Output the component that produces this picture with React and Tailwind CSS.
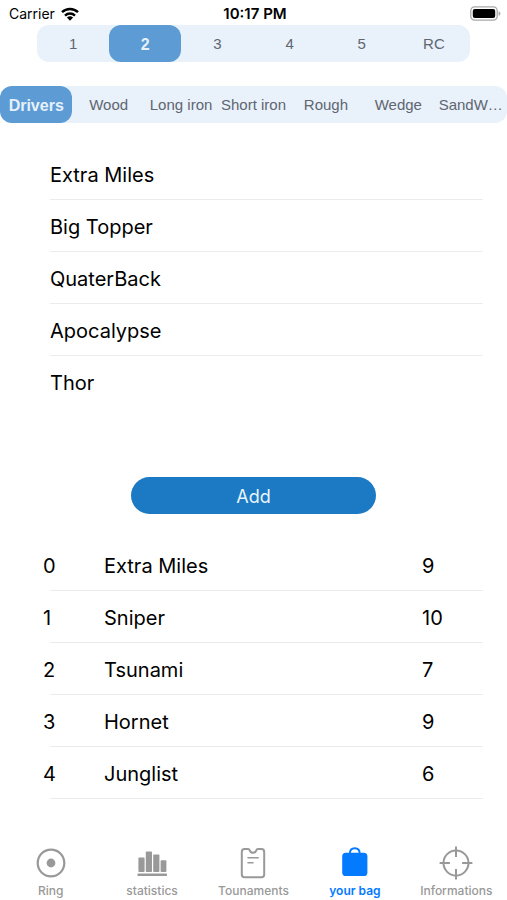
import { useState } from "react";

const holes = ["1", "2", "3", "4", "5", "RC"];
const shots = ["Drivers", "Wood", "Long iron", "Short iron", "Rough", "Wedge", "SandW…"];
const drivers = ["Extra Miles", "Big Topper", "QuaterBack", "Apocalypse", "Thor"];
const bag = [
  ["Extra Miles", 9],
  ["Sniper", 10],
  ["Tsunami", 7],
  ["Hornet", 9],
  ["Junglist", 6],
];

function Segmented({ items, initial, label }) {
  const [selected, setSelected] = useState(initial);
  return (
    <div
      role="group"
      aria-label={label}
      className="flex h-[37px] rounded-xl bg-[#e9f1fb] font-['Liberation_Sans',Arial,sans-serif]"
    >
      {items.map((item) => (
        <button
          key={item}
          type="button"
          aria-pressed={item === selected}
          onClick={() => setSelected(item)}
          className={
            item === selected
              ? "min-w-0 flex-1 basis-0 rounded-xl bg-[#5c9bd3] pt-0.5 text-base font-bold whitespace-nowrap text-[#e6f1fb]"
              : "min-w-0 flex-1 basis-0 rounded-xl pt-0.5 text-[15px] whitespace-nowrap text-[#5f6670]"
          }
        >
          {item}
        </button>
      ))}
    </div>
  );
}

function WifiIcon() {
  return (
    <svg viewBox="0 0 18 14" className="h-[14px] w-[18px]" aria-hidden="true">
      <g fill="none" stroke="#000" strokeWidth="2.5">
        <path d="M1 5.2a11.6 11.6 0 0 1 16 0" />
        <path d="M4 8.6a7.3 7.3 0 0 1 10 0" />
      </g>
      <path d="M5.9 10.6a4.5 4.5 0 0 1 6.2 0L9 13.8z" fill="#000" />
    </svg>
  );
}

function BatteryIcon() {
  return (
    <svg viewBox="0 0 31 15" className="h-[15px] w-[31px]" aria-hidden="true">
      <rect x="0.8" y="0.9" width="26.4" height="13.2" rx="3.8" fill="#fff" stroke="#a8a8a8" strokeWidth="1.3" />
      <rect x="2.8" y="2.9" width="22.4" height="9.2" rx="2" fill="#000" />
      <path d="M28.6 5.2c2.4.8 2.4 3.8 0 4.6z" fill="#a8a8a8" />
    </svg>
  );
}

function RingIcon() {
  return (
    <svg viewBox="0 0 36 36" className="size-9" aria-hidden="true">
      <circle cx="18" cy="18" r="13.3" fill="none" stroke="currentColor" strokeWidth="2.2" />
      <circle cx="18" cy="18" r="4.4" fill="currentColor" />
    </svg>
  );
}

function StatsIcon() {
  return (
    <svg viewBox="0 0 36 36" className="size-9" fill="currentColor" aria-hidden="true">
      <rect x="4.4" y="12.6" width="6.2" height="14.4" rx="0.8" />
      <rect x="11.8" y="6.4" width="6.2" height="20.6" rx="0.8" />
      <rect x="19.2" y="9.6" width="6.2" height="17.4" rx="0.8" />
      <rect x="26.6" y="15.3" width="5.8" height="11.7" rx="0.8" />
      <rect x="3.5" y="28.6" width="29.5" height="2.3" rx="0.4" />
    </svg>
  );
}

function CardIcon() {
  return (
    <svg viewBox="0 0 36 36" className="size-9" fill="none" stroke="currentColor" strokeLinecap="round" strokeLinejoin="round" aria-hidden="true">
      <path
        strokeWidth="2"
        d="M9.6 4.1h3.5c.9 0 1.300.500 1.600 1.300.500 1.500 1.700 2.400 3.300 2.400s2.800-.900 3.300-2.400c.300-.800.700-1.300 1.600-1.300h3.500c1.700 0 2.800 1.100 2.800 2.800v22.600c0 1.700-1.100 2.800-2.800 2.800H9.600c-1.700 0-2.800-1.100-2.800-2.800V6.900c0-1.700 1.100-2.800 2.800-2.800z"
      />
      <path strokeWidth="1.6" d="M13 12.7h10.200M13 17.7h5" />
    </svg>
  );
}

function BagIcon() {
  return (
    <svg viewBox="0 0 36 36" className="size-9" aria-hidden="true">
      <rect x="5.2" y="7.7" width="25.2" height="23.300" rx="3.6" fill="currentColor" />
      <path d="M12.900 8.500c0-3.400 2-5.300 4.900-5.300s4.900 1.900 4.900 5.300" fill="none" stroke="currentColor" strokeWidth="1.9" />
    </svg>
  );
}

function CrosshairIcon() {
  return (
    <svg viewBox="0 0 36 36" className="size-9" fill="none" stroke="currentColor" strokeWidth="2" aria-hidden="true">
      <circle cx="18" cy="18" r="12.5" />
      <path d="M18 1.600v10.300M18 24.100v10.300M1.600 18h10.300M24.100 18h10.300" />
    </svg>
  );
}

const tabs = [
  { name: "Ring", Icon: RingIcon },
  { name: "statistics", Icon: StatsIcon },
  { name: "Tounaments", Icon: CardIcon },
  { name: "your bag", Icon: BagIcon, current: true },
  { name: "Informations", Icon: CrosshairIcon },
];

export default function App() {
  return (
    <div className="flex min-h-screen flex-col bg-white font-[Inter,Roboto,sans-serif] text-black">
      <header className="grid h-[25px] grid-cols-3 items-center pt-0.5 pr-1.5 pl-[9px] text-sm">
        <div className="flex items-center gap-1.5">
          <span>Carrier</span>
          <WifiIcon />
        </div>
        <div className="text-center text-[15px] leading-5 font-semibold">10:17 PM</div>
        <div className="flex justify-end">
          <BatteryIcon />
        </div>
      </header>

      <main>
        <div className="px-[37px]">
          <Segmented items={holes} initial="2" label="Hole" />
        </div>
        <div className="mt-6">
          <Segmented items={shots} initial="Drivers" label="Shot" />
        </div>

        <ul className="mt-[25px] mr-6 ml-[50px] text-xl">
          {drivers.map((name) => (
            <li key={name} className="flex h-[52px] items-center border-b border-[#ececec] pt-0.5 last:border-transparent">
              {name}
            </li>
          ))}
        </ul>

        <div className="mt-[69px] flex justify-center">
          <button
            type="button"
            className="h-[37px] w-[245px] rounded-full bg-[#1b7ac3] pt-0.5 text-lg text-[#e8f4fc]"
          >
            Add
          </button>
        </div>

        <div className="mt-[25px] mr-6 ml-[50px]">
          <table className="w-full table-fixed border-separate border-spacing-0 text-left text-xl">
            <tbody>
              {bag.map(([name, count], index) => (
                <tr key={name}>
                  <td className="h-[52px] w-[54px] border-b border-[#ececec] p-0 pt-0.5">
                    <span className="-ml-[7px]">{index}</span>
                  </td>
                  <td className="border-b border-[#ececec] p-0 pt-0.5">{name}</td>
                  <td className="w-[61px] border-b border-[#ececec] p-0 pt-0.5">{count}</td>
                </tr>
              ))}
            </tbody>
          </table>
        </div>
      </main>

      <nav className="mt-auto grid grid-cols-5 pb-px">
        {tabs.map(({ name, Icon, current }) => (
          <a
            key={name}
            href="#"
            aria-current={current ? "page" : undefined}
            className={
              current
                ? "flex flex-col items-center text-xs font-semibold text-[#047aff]"
                : "flex flex-col items-center text-xs font-medium text-[#999999]"
            }
          >
            <Icon />
            <span className="mt-0.5 leading-4">{name}</span>
          </a>
        ))}
      </nav>
    </div>
  );
}
